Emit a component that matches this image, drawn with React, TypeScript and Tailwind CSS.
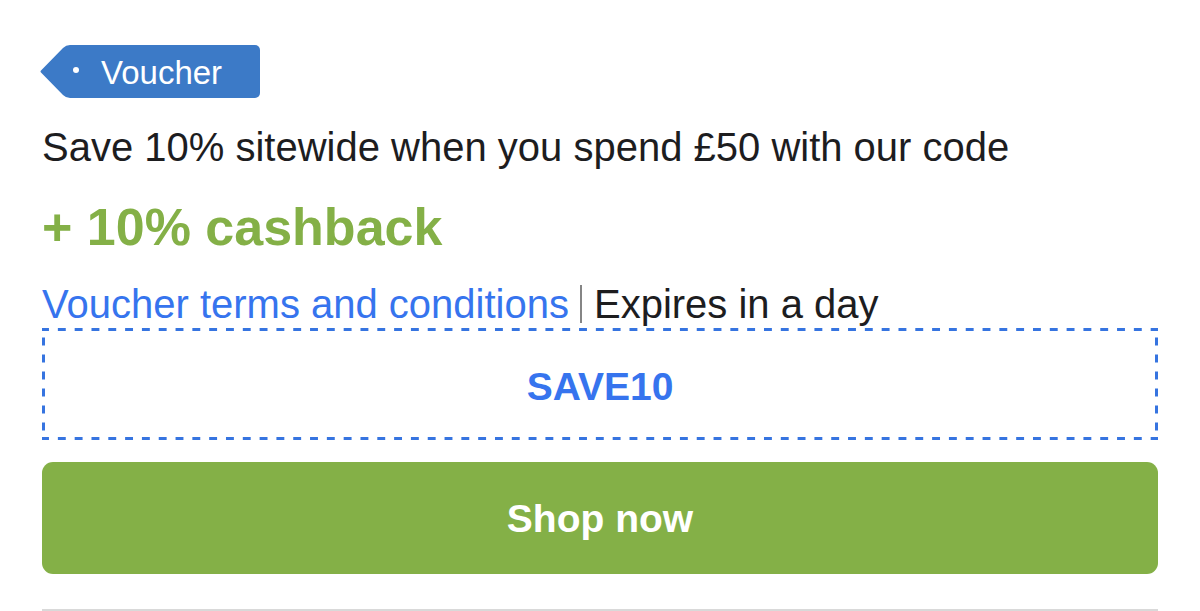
import { useState } from 'react';

const OFFER = {
  type: 'Voucher',
  title: 'Save 10% sitewide when you spend £50 with our code',
  cashback: '+ 10% cashback',
  expires: 'Expires in a day',
  code: 'SAVE10',
};

export default function App() {
  return (
    <main className="bg-white px-[42px] pt-[45px] font-['Liberation_Sans',Arial,sans-serif] text-[40px] leading-[48px] text-[#1d1d1f]">
      <article className="border-b-2 border-[#d9d9d9] pb-[35px]">
        <VoucherTag label={OFFER.type} />
        <h2 className="mt-[25px]">{OFFER.title}</h2>
        <p className="mt-[28px] text-[52px] leading-[56px] font-bold text-[#84b047]">{OFFER.cashback}</p>
        <div className="mt-[25px] flex items-center">
          <a href="#terms" className="text-[#3674ee]">Voucher terms and conditions</a>
          <span className="mr-[12px] ml-[11px] h-[38px] w-[2px] bg-[#858585]" />
          <span>{OFFER.expires}</span>
        </div>
        <CodeBox code={OFFER.code} />
        <button type="button" className="mt-[22px] h-[112px] w-full rounded-[11px] bg-[#84b047] pt-[2px] text-[39px] font-bold text-white">
          Shop now
        </button>
      </article>
    </main>
  );
}

function VoucherTag({ label }: { label: string }) {
  return (
    <div className="-ml-[2px] flex h-[53px] w-fit text-[33px] leading-[55px] text-white">
      <TagPoint />
      <span className="h-full rounded-r-[5px] bg-[#3c7ac7] pr-[38px] pl-[21px]">{label}</span>
    </div>
  );
}

// Clicking the box copies the code
function CodeBox({ code }: { code: string }) {
  const [copied, setCopied] = useState(false);

  const copy = () => {
    navigator.clipboard?.writeText(code);
    setCopied(true);
  };

  return (
    <button
      type="button"
      onClick={copy}
      aria-pressed={copied}
      className="block h-[112px] w-full border-3 border-transparent bg-[linear-gradient(90deg,#3674e0_25%,transparent_25%_75%,#3674e0_75%),linear-gradient(90deg,#3674e0_25%,transparent_25%_75%,#3674e0_75%),linear-gradient(#3674e0_4px,transparent_4px_13px,#3674e0_13px),linear-gradient(#3674e0_4px,transparent_4px_13px,#3674e0_13px)] [background-position:0_-3px,0_calc(100%_+_3px),-3px_center,calc(100%_+_3px)_center] [background-repeat:repeat-x,repeat-x,repeat-y,repeat-y] [background-size:calc(100%/66)_3px,calc(100%/66)_3px,3px_17px,3px_17px] pt-[6px] text-[39px] font-bold text-[#3674ee]"
    >
      {code}
    </button>
  );
}

function TagPoint() {
  return (
    <svg width="40" height="53" viewBox="0 0 40 53" aria-hidden="true">
      <path d="M41 0H30Q26 0 23 3L1 25.5Q0 26.5 1 27.5L23 50Q26 53 30 53H41Z" fill="#3c7ac7" />
      <circle cx="36" cy="25" r="3" fill="#fff" />
    </svg>
  );
}
